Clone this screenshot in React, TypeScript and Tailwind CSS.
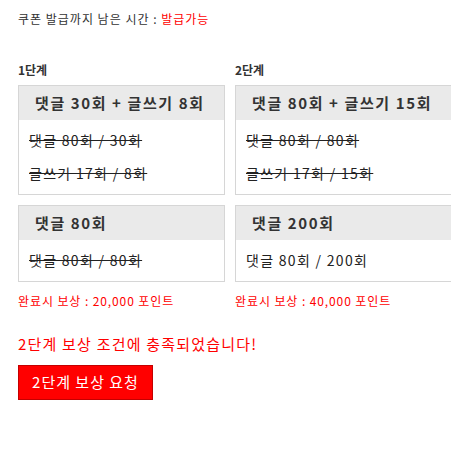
import React from 'react';

type Line = { text: string; done: boolean };
type Box = { title: string; lines: Line[] };

const stages: { name: string; width: string; boxes: Box[]; reward: string }[] = [
  {
    name: '1단계',
    width: 'w-[207px]',
    boxes: [
      {
        title: '댓글 30회 + 글쓰기 8회',
        lines: [
          { text: '댓글 80회 / 30회', done: true },
          { text: '글쓰기 17회 / 8회', done: true },
        ],
      },
      { title: '댓글 80회', lines: [{ text: '댓글 80회 / 80회', done: true }] },
    ],
    reward: '완료시 보상 : 20,000 포인트',
  },
  {
    name: '2단계',
    width: 'w-[217px]',
    boxes: [
      {
        title: '댓글 80회 + 글쓰기 15회',
        lines: [
          { text: '댓글 80회 / 80회', done: true },
          { text: '글쓰기 17회 / 15회', done: true },
        ],
      },
      { title: '댓글 200회', lines: [{ text: '댓글 80회 / 200회', done: false }] },
    ],
    reward: '완료시 보상 : 40,000 포인트',
  },
];

const App = () => {
  return (
    <div
      className="w-[451px] h-[454px] overflow-hidden bg-white pl-[18px] pt-[10px] text-[#333]"
      style={{ fontFamily: '"Noto Sans CJK KR", "Noto Sans", sans-serif' }}
    >
      <p className="text-[12px] leading-[18px] tracking-[1px]">
        쿠폰 발급까지 남은 시간 : <span className="text-[#ff0000]">발급가능</span>
      </p>

      <div className="flex gap-[10px] mt-[34px]">
        {stages.map((stage) => (
          <div key={stage.name} className={`${stage.width} shrink-0`}>
            <h3 className="text-[12px] leading-[16px] font-bold mb-[7px]">{stage.name}</h3>
            {stage.boxes.map((box, i) => (
              <div key={i} className="border border-[#d6d6d6] mb-[10px] last:mb-0">
                <div className="bg-[#eaeaea] px-[16px] text-[15px] leading-[34px] font-bold tracking-[1.6px] whitespace-nowrap">
                  {box.title}
                </div>
                <div className="py-[4px] px-[10px]">
                  {box.lines.map((line, j) => (
                    <p
                      key={j}
                      className={`text-[14px] leading-[33px] tracking-[1.3px] whitespace-nowrap text-[#222] ${line.done ? 'line-through' : ''}`}
                    >
                      {line.text}
                    </p>
                  ))}
                </div>
              </div>
            ))}
            <p className="text-[12px] leading-[18px] tracking-[0.9px] text-[#ff0000] mt-[10px]">{stage.reward}</p>
          </div>
        ))}
      </div>

      <p className="text-[15px] leading-[20px] tracking-[1.2px] text-[#ff0000] mt-[24px]">
        2단계 보상 조건에 충족되었습니다!
      </p>
      <button className="mt-[11px] w-[135px] h-[35px] bg-[#ff0000] border border-[#c40000] text-white text-[15px] tracking-[1px]">
        2단계 보상 요청
      </button>
    </div>
  );
};

export default App;
